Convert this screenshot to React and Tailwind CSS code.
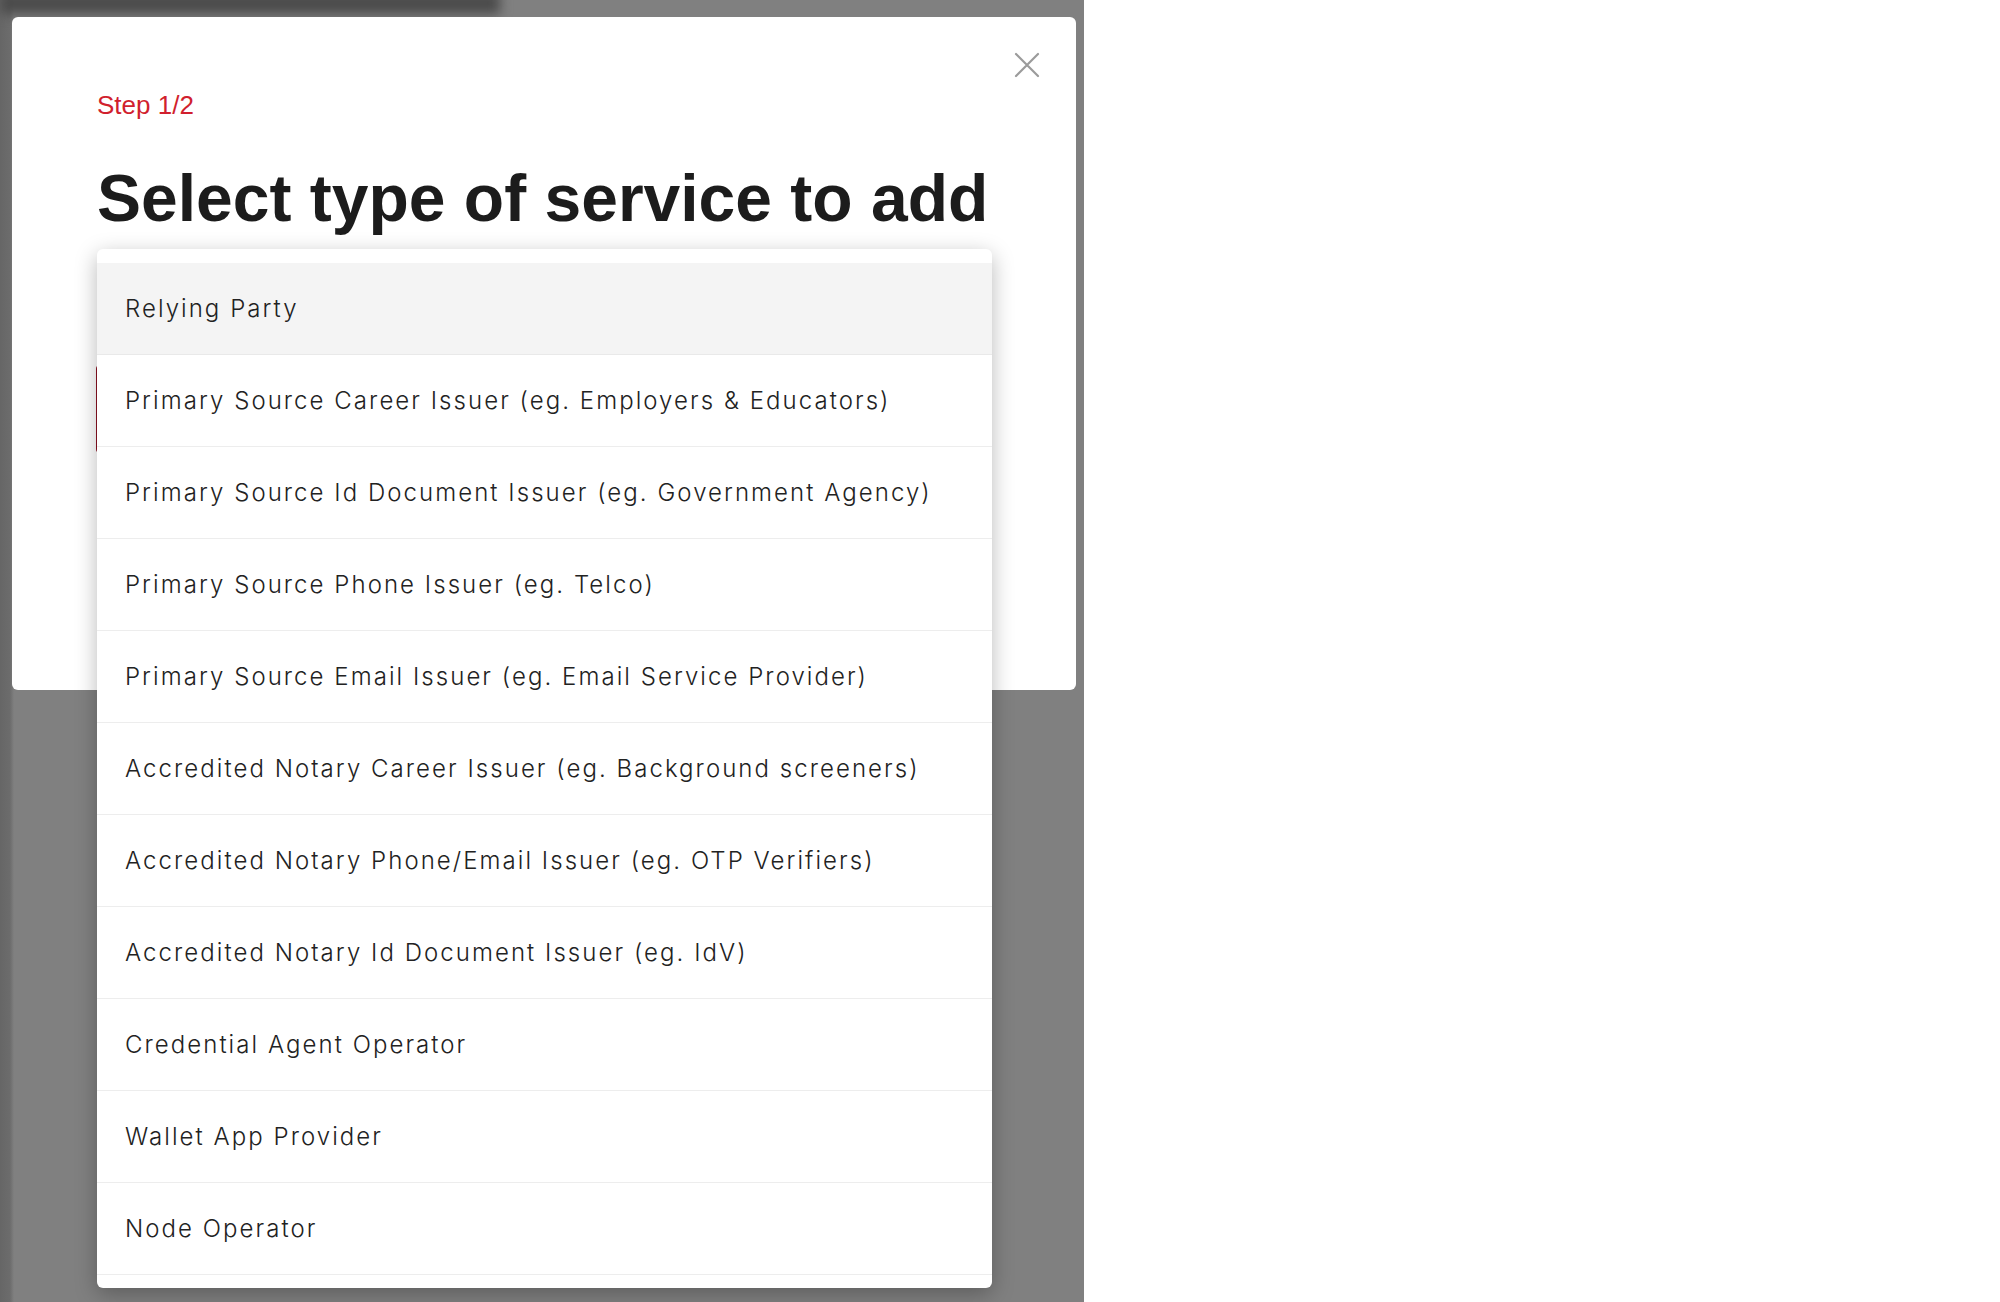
import React from 'react';

const services = [
  'Relying Party',
  'Primary Source Career Issuer (eg. Employers & Educators)',
  'Primary Source Id Document Issuer (eg. Government Agency)',
  'Primary Source Phone Issuer (eg. Telco)',
  'Primary Source Email Issuer (eg. Email Service Provider)',
  'Accredited Notary Career Issuer (eg. Background screeners)',
  'Accredited Notary Phone/Email Issuer (eg. OTP Verifiers)',
  'Accredited Notary Id Document Issuer (eg. IdV)',
  'Credential Agent Operator',
  'Wallet App Provider',
  'Node Operator',
];

const CloseIcon = () => (
  <svg width="26" height="26" viewBox="0 0 26 26" fill="none" stroke="#9b9b9b" strokeWidth="2.2" strokeLinecap="round">
    <path d="M2 2 L24 24 M24 2 L2 24" />
  </svg>
);

const ServiceMenu = () => (
  <ul className="absolute left-[85px] top-[232px] w-[895px] rounded-[6px] bg-white pt-[14px] pb-[13px] shadow-[0_6px_22px_rgba(0,0,0,0.28)]">
    {services.map((s, i) => (
      <li
        key={s}
        className={
          i === 0
            ? 'flex h-[92px] items-center border-b border-[#e9e9e9] bg-[#f4f4f4] pl-[28px] text-[24px] font-light tracking-[2.05px] text-[#222]'
            : 'flex h-[92px] items-center border-b border-[#ededed] pl-[28px] text-[24px] font-light tracking-[2.05px] text-[#222]'
        }
        style={{ fontFamily: 'Inter, "Noto Sans", sans-serif' }}
      >
        {s}
      </li>
    ))}
  </ul>
);

export default function App() {
  return (
    <div className="flex h-[1302px] w-[2000px] bg-white">
      <div className="relative h-[1302px] w-[1084px] overflow-hidden bg-[#808080] bg-[linear-gradient(to_right,#666_0px,#6c6c6c_10px,#808080_14px)]">
        {/* blurred header of the page behind */}
        <div className="absolute -top-[8px] left-0 h-[22px] w-[500px] bg-[#4a4a4a] blur-[6px]" />

        <div
          className="relative ml-[12px] mt-[17px] h-[673px] w-[1064px] rounded-[6px] bg-white pl-[85px] pr-[84px]"
          style={{ fontFamily: '"Liberation Sans", Arial, sans-serif' }}
        >
          <button className="absolute right-[36px] top-[35px] flex h-[26px] w-[26px] items-center justify-center">
            <CloseIcon />
          </button>

          <div className="pt-[73px] text-[26px] leading-[30px] text-[#d11f2e]">Step 1/2</div>
          <h1 className="mt-[40px] whitespace-nowrap text-[66px] font-bold leading-[76px] text-[#1c1c1c]">
            Select type of service to add
          </h1>

          <div className="-ml-[1px] mt-[129px] h-[88px] rounded-[4px] border-2 border-[#8a1020]" />

          <ServiceMenu />
        </div>
      </div>
    </div>
  );
}
